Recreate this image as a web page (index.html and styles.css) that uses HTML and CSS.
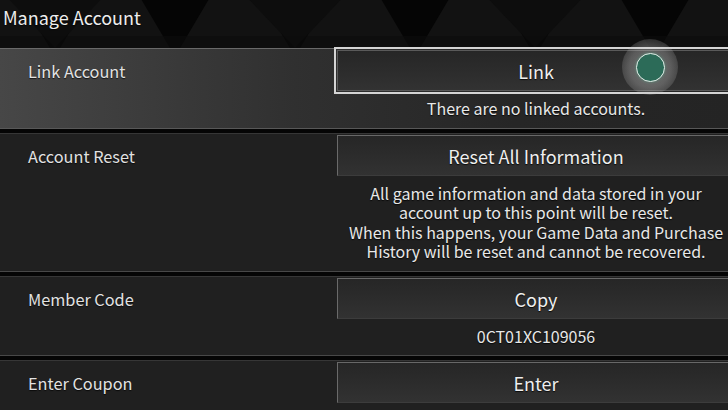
FILE: index.html
```html
<!DOCTYPE html>
<html lang="en">
<head>
<meta charset="utf-8">
<title>Manage Account</title>
<link rel="stylesheet" href="styles.css">
</head>
<body>
<div class="screen">
  <svg class="bg" width="728" height="410" viewBox="0 0 728 410" aria-hidden="true">
    <rect width="728" height="410" fill="#050505"/>
    <g fill="#121212">
      <polygon points="-60,48 -5,-45 50,48"/>
      <polygon points="60,48 115,-45 170,48"/>
      <polygon points="180,48 235,-45 290,48"/>
      <polygon points="300,48 355,-45 410,48"/>
      <polygon points="420,48 475,-45 530,48"/>
      <polygon points="540,48 595,-45 650,48"/>
      <polygon points="660,48 715,-45 770,48"/>
    </g>
    <g fill="#0d0d0d">
      <polygon points="0,-10 55,48 110,-10"/>
      <polygon points="240,-10 295,48 350,-10"/>
      <polygon points="480,-10 535,48 590,-10"/>
    </g>
    <rect y="36" width="728" height="12" fill="#0b0b0b" opacity="0.6"/>
  </svg>

  <h1 class="title">Manage Account</h1>

  <div class="rows">
    <section class="row row-active">
      <div class="label">Link Account</div>
      <div class="action">
        <div class="btn btn-selected">Link</div>
        <p class="desc"><span class="line">There are no linked accounts.</span></p>
      </div>
    </section>

    <section class="row">
      <div class="label">Account Reset</div>
      <div class="action">
        <div class="btn">Reset All Information</div>
        <p class="desc">
          <span class="line">All game information and data stored in your</span>
          <span class="line">account up to this point will be reset.</span>
          <span class="line">When this happens, your Game Data and Purchase</span>
          <span class="line">History will be reset and cannot be recovered.</span>
        </p>
      </div>
    </section>

    <section class="row">
      <div class="label">Member Code</div>
      <div class="action">
        <div class="btn">Copy</div>
        <p class="desc desc-code"><span class="line">0CT01XC109056</span></p>
      </div>
    </section>

    <section class="row">
      <div class="label">Enter Coupon</div>
      <div class="action">
        <div class="btn">Enter</div>
        <p class="desc"><span class="line">&nbsp;</span></p>
      </div>
    </section>
  </div>

  <div class="touch"><span class="touch-dot"></span></div>
</div>
</body>
</html>
```

FILE: styles.css
```css
* { box-sizing: border-box; }

html, body {
  margin: 0;
  padding: 0;
  background: #000;
}

body {
  width: 728px;
  height: 410px;
  overflow: hidden;
  font-family: "Noto Sans CJK JP", "Noto Sans", sans-serif;
  color: #e8e8e8;
}

.screen {
  position: relative;
  width: 728px;
  height: 410px;
  overflow: hidden;
}

.bg {
  position: absolute;
  left: 0;
  top: 0;
}

.title {
  position: relative;
  margin: 0;
  height: 48px;
  padding-left: 3px;
  font-size: 18px;
  font-weight: 400;
  line-height: 35px;
  color: #ededed;
  text-shadow: 0 1px 1px rgba(0, 0, 0, 0.7);
}

.rows {
  position: relative;
  display: flex;
  flex-direction: column;
  gap: 4px;
}

.row {
  display: grid;
  grid-template-columns: 337px 398px;
  width: 735px;
  background: #202020;
  border-top: 1px solid #363636;
  border-bottom: 1px solid #484848;
}

.row-active {
  background: linear-gradient(90deg, #474747 0%, #303030 40%, #262626 70%, #242424 100%);
  border-top-color: #6a6a6a;
  border-bottom-color: #585858;
}

.label {
  margin-top: 1px;
  height: 41px;
  padding-left: 28px;
  font-size: 16.3px;
  line-height: 42px;
  color: #e2e2e2;
  text-shadow: 0 1px 1px rgba(0, 0, 0, 0.7);
}

.action {
  display: flex;
  flex-direction: column;
  align-items: stretch;
}

.btn {
  margin-top: 1px;
  height: 41px;
  background: linear-gradient(180deg, #262626 0%, #2d2d2d 60%, #323232 100%);
  border: 1px solid #3c3c3c;
  border-top-color: #686868;
  border-left-color: #6a6a6a;
  font-size: 18px;
  line-height: 40px;
  text-align: center;
  color: #efefef;
  text-shadow: 0 1px 1px rgba(0, 0, 0, 0.8);
}

.btn-selected {
  outline: 2px solid #d4d4d4;
  outline-offset: 1px;
  border-color: #5a5a5a;
}

.desc {
  margin: 0;
  padding: 8px 0 9px;
  font-size: 16px;
  text-align: center;
  white-space: nowrap;
  color: #e8e8e8;
  text-shadow: 0 1px 1px rgba(0, 0, 0, 0.8);
}

.line {
  display: block;
  height: 19.5px;
  line-height: 19.5px;
  overflow: visible;
}

.desc-code {
  font-size: 16px;
}

.touch {
  position: absolute;
  left: 622px;
  top: 39px;
  width: 56px;
  height: 56px;
  border-radius: 50%;
  background: radial-gradient(circle, rgba(235, 235, 235, 0.4) 0%, rgba(210, 210, 210, 0.3) 52%, rgba(170, 170, 170, 0.18) 75%, rgba(120, 120, 120, 0.06) 100%);
  display: flex;
  align-items: center;
  justify-content: center;
}

.touch-dot {
  width: 29px;
  height: 29px;
  border-radius: 50%;
  background: #2c6b58;
  border: 1.5px solid #e8f0ec;
  box-shadow: 0 0 3px rgba(80, 160, 130, 0.6);
}
```
